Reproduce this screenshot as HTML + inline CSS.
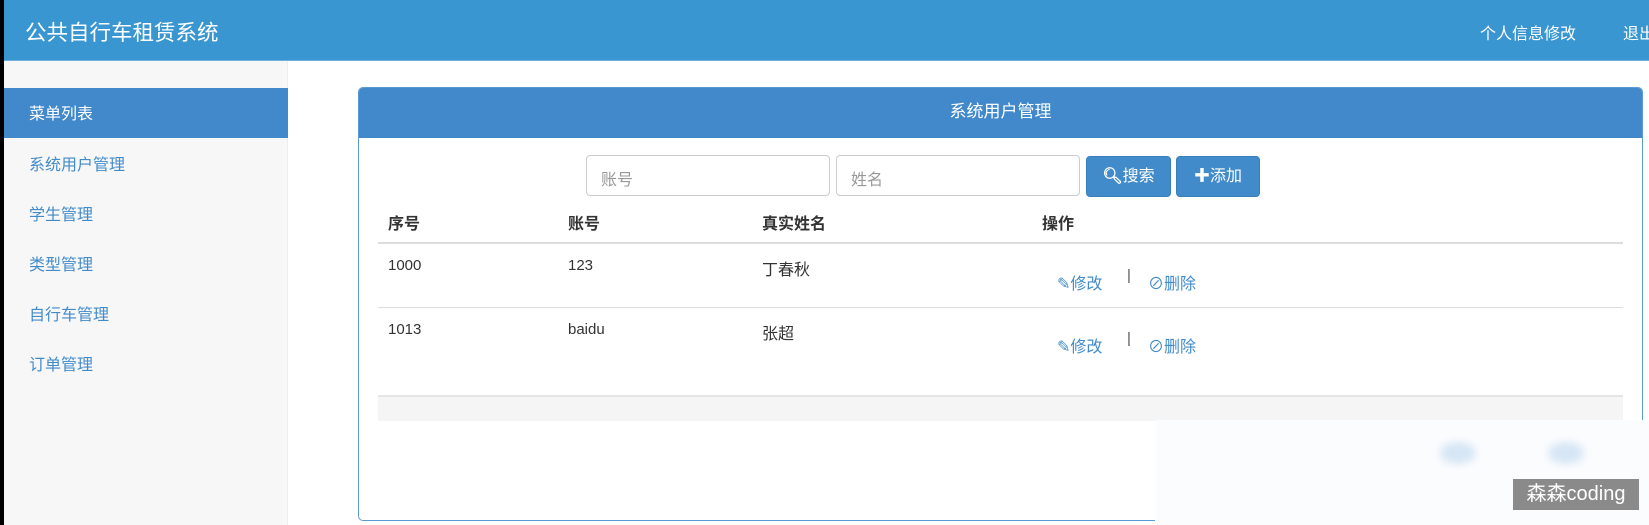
<!DOCTYPE html>
<html style="overflow:hidden"><head><meta charset="utf-8"><style>
*{margin:0;padding:0;box-sizing:border-box}
html,body{width:1649px;height:525px;overflow:hidden}
body{background:#fff;font-family:"Liberation Sans","Noto Sans CJK SC",sans-serif;font-size:15px;color:#333}
#w{position:relative;width:1649px;height:525px;overflow:hidden}
.a{position:absolute;white-space:nowrap}
.hdr{left:0;top:0;width:1649px;height:61px;background:#3a96d0;border-bottom:1px solid #6fb0de}
.blk{left:0;top:0;width:4px;height:525px;background:#000}
.side{left:4px;top:61px;width:284px;height:464px;background:#f7f7f7;border-right:1px solid #eee}
.act{left:4px;top:88px;width:284px;height:50px;background:#4189cb;color:#fff;padding:12px 25px;font-size:16px}
.si{left:29px;color:#428bca;font-size:16px}
.panel{left:358px;top:87px;width:1285px;height:434px;border:1px solid #5b9bd5;border-radius:5px;overflow:hidden}
.ph{left:0;top:0;width:100%;height:50px;background:#4189cb;color:#fff;font-size:17px;text-align:center;line-height:48px}
.inp{height:41px;border:1px solid #ccc;border-radius:4px;color:#999;padding:10px 14px;font-size:16px}
.btn{height:41px;background:#428bca;border:1px solid #3a7fbd;border-radius:4px;color:#fff;font-size:16px;line-height:39px;text-align:center}
.th{font-weight:bold;font-size:16px;top:210px}
.td{font-size:15px}
.lk{color:#428bca;font-size:16px}
</style></head><body><div id="w">
<div class="a hdr"></div>
<div class="a" style="left:25px;top:16px;color:#fff;font-size:21.5px">公共自行车租赁系统</div>
<div class="a" style="left:1480px;top:20px;color:#fff;font-size:16px">个人信息修改</div>
<div class="a" style="left:1623px;top:20px;color:#fff;font-size:16px">退出</div>
<div class="a side"></div>
<div class="a act">菜单列表</div>
<div class="a si" style="top:151px">系统用户管理</div>
<div class="a si" style="top:201px">学生管理</div>
<div class="a si" style="top:251px">类型管理</div>
<div class="a si" style="top:301px">自行车管理</div>
<div class="a si" style="top:351px">订单管理</div>
<div class="a panel"><div class="a ph">系统用户管理</div></div>
<div class="a inp" style="left:586px;top:155px;width:244px">账号</div>
<div class="a inp" style="left:836px;top:155px;width:244px">姓名</div>
<div class="a btn" style="left:1086px;top:156px;width:85px"><b>&#x1F50D;&#xFE0E;</b>搜索</div>
<div class="a btn" style="left:1176px;top:156px;width:84px"><b>✚</b>添加</div>
<div class="a th" style="left:388px">序号</div>
<div class="a th" style="left:568px">账号</div>
<div class="a th" style="left:762px">真实姓名</div>
<div class="a th" style="left:1042px">操作</div>
<div class="a" style="left:378px;top:242px;width:1245px;height:2px;background:#ddd"></div>
<div class="a td" style="left:388px;top:257px">1000</div>
<div class="a td" style="left:568px;top:257px">123</div>
<div class="a td" style="left:762px;top:256px;font-size:16px">丁春秋</div>
<div class="a lk" style="left:1057px;top:270px">✎修改</div>
<div class="a" style="left:1127px;top:267px;color:#555">|</div>
<div class="a lk" style="left:1148px;top:270px">⊘删除</div>
<div class="a" style="left:378px;top:307px;width:1245px;height:1px;background:#ddd"></div>
<div class="a td" style="left:388px;top:321px">1013</div>
<div class="a td" style="left:568px;top:321px">baidu</div>
<div class="a td" style="left:762px;top:320px;font-size:16px">张超</div>
<div class="a lk" style="left:1057px;top:333px">✎修改</div>
<div class="a" style="left:1127px;top:330px;color:#555">|</div>
<div class="a lk" style="left:1148px;top:333px">⊘删除</div>
<div class="a" style="left:378px;top:395px;width:1245px;height:26px;background:#f5f5f5;border-top:2px solid #e5e5e5"></div>
<div class="a" style="left:1155px;top:420px;width:494px;height:105px;background:#fbfcfe"></div>
<div class="a" style="left:1440px;top:442px;width:36px;height:22px;border-radius:50%;background:#d6e6f5;filter:blur(4px)"></div>
<div class="a" style="left:1548px;top:442px;width:36px;height:22px;border-radius:50%;background:#d6e6f5;filter:blur(4px)"></div>
<div class="a" style="left:1513px;top:479px;width:126px;height:31px;background:#8a8a8a;color:#fff;font-size:20px;text-align:center;line-height:31px">森森coding</div>
<div class="a blk"></div>
</div></body></html>
